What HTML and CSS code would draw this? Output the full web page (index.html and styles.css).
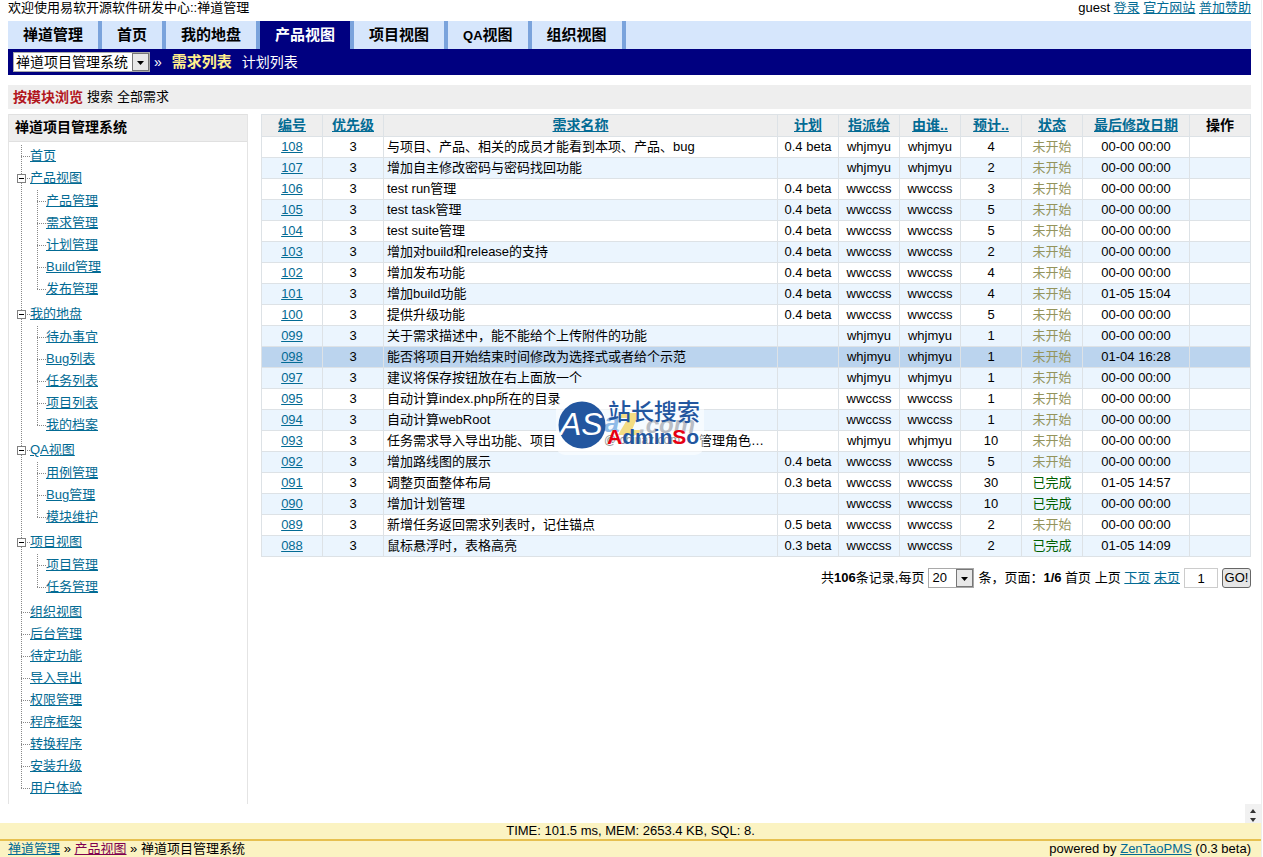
FILE: index.html
```html
<!DOCTYPE html>
<html lang="zh-CN">
<head>
<meta charset="utf-8">
<title>禅道管理</title>
<link rel="stylesheet" href="styles.css">
</head>
<body>
<div class="page">
<header class="header">
  <div class="topbar">
    <span>欢迎使用易软开源软件研发中心::禅道管理</span>
    <span>guest <a href="#">登录</a> <a href="#">官方网站</a> <a href="#">普加赞助</a></span>
  </div>
  <nav class="mainnav">
    <a href="#">禅道管理</a><a href="#">首页</a><a href="#">我的地盘</a><a href="#" class="active">产品视图</a><a href="#">项目视图</a><a href="#"><span class="latin">QA</span>视图</a><a href="#">组织视图</a>
  </nav>
  <nav class="subnav">
    <select class="product" aria-label="产品"><option>禅道项目管理系统</option></select>
    <span class="arrow">»</span>
    <a href="#" class="active">需求列表</a>
    <a href="#">计划列表</a>
  </nav>
  <div class="featurebar"><a href="#" class="active">按模块浏览</a><a href="#">搜索</a><a href="#">全部需求</a></div>
</header>
<main class="main">
  <aside class="sidebar">
    <h2>禅道项目管理系统</h2>
    <ul class="tree">
      <li><a href="#">首页</a></li>
      <li><button class="toggle" type="button" aria-label="折叠"></button><a href="#">产品视图</a>
        <ul>
          <li><a href="#">产品管理</a></li>
          <li><a href="#">需求管理</a></li>
          <li><a href="#">计划管理</a></li>
          <li><a href="#">Build管理</a></li>
          <li><a href="#">发布管理</a></li>
        </ul>
      </li>
      <li><button class="toggle" type="button" aria-label="折叠"></button><a href="#">我的地盘</a>
        <ul>
          <li><a href="#">待办事宜</a></li>
          <li><a href="#">Bug列表</a></li>
          <li><a href="#">任务列表</a></li>
          <li><a href="#">项目列表</a></li>
          <li><a href="#">我的档案</a></li>
        </ul>
      </li>
      <li><button class="toggle" type="button" aria-label="折叠"></button><a href="#">QA视图</a>
        <ul>
          <li><a href="#">用例管理</a></li>
          <li><a href="#">Bug管理</a></li>
          <li><a href="#">模块维护</a></li>
        </ul>
      </li>
      <li><button class="toggle" type="button" aria-label="折叠"></button><a href="#">项目视图</a>
        <ul>
          <li><a href="#">项目管理</a></li>
          <li><a href="#">任务管理</a></li>
        </ul>
      </li>
      <li><a href="#">组织视图</a></li>
      <li><a href="#">后台管理</a></li>
      <li><a href="#">待定功能</a></li>
      <li><a href="#">导入导出</a></li>
      <li><a href="#">权限管理</a></li>
      <li><a href="#">程序框架</a></li>
      <li><a href="#">转换程序</a></li>
      <li><a href="#">安装升级</a></li>
      <li><a href="#">用户体验</a></li>
    </ul>
  </aside>
  <section class="content">
    <table class="stories">
      <colgroup><col class="c-std"><col class="c-std"><col><col class="c-std"><col class="c-std"><col class="c-std"><col class="c-std"><col class="c-std"><col class="c-date"><col class="c-std"></colgroup>
      <thead>
        <tr><th><a href="#">编号</a></th><th><a href="#">优先级</a></th><th><a href="#">需求名称</a></th><th><a href="#">计划</a></th><th><a href="#">指派给</a></th><th><a href="#">由谁..</a></th><th><a href="#">预计..</a></th><th><a href="#">状态</a></th><th><a href="#">最后修改日期</a></th><th>操作</th></tr>
      </thead>
      <tbody>
        <tr><td><a href="#">108</a></td><td>3</td><td class="name">与项目、产品、相关的成员才能看到本项、产品、bug</td><td>0.4 beta</td><td>whjmyu</td><td>whjmyu</td><td>4</td><td class="wait">未开始</td><td>00-00 00:00</td><td></td></tr>
        <tr><td><a href="#">107</a></td><td>3</td><td class="name">增加自主修改密码与密码找回功能</td><td></td><td>whjmyu</td><td>whjmyu</td><td>2</td><td class="wait">未开始</td><td>00-00 00:00</td><td></td></tr>
        <tr><td><a href="#">106</a></td><td>3</td><td class="name">test run管理</td><td>0.4 beta</td><td>wwccss</td><td>wwccss</td><td>3</td><td class="wait">未开始</td><td>00-00 00:00</td><td></td></tr>
        <tr><td><a href="#">105</a></td><td>3</td><td class="name">test task管理</td><td>0.4 beta</td><td>wwccss</td><td>wwccss</td><td>5</td><td class="wait">未开始</td><td>00-00 00:00</td><td></td></tr>
        <tr><td><a href="#">104</a></td><td>3</td><td class="name">test suite管理</td><td>0.4 beta</td><td>wwccss</td><td>wwccss</td><td>5</td><td class="wait">未开始</td><td>00-00 00:00</td><td></td></tr>
        <tr><td><a href="#">103</a></td><td>3</td><td class="name">增加对build和release的支持</td><td>0.4 beta</td><td>wwccss</td><td>wwccss</td><td>2</td><td class="wait">未开始</td><td>00-00 00:00</td><td></td></tr>
        <tr><td><a href="#">102</a></td><td>3</td><td class="name">增加发布功能</td><td>0.4 beta</td><td>wwccss</td><td>wwccss</td><td>4</td><td class="wait">未开始</td><td>00-00 00:00</td><td></td></tr>
        <tr><td><a href="#">101</a></td><td>3</td><td class="name">增加build功能</td><td>0.4 beta</td><td>wwccss</td><td>wwccss</td><td>4</td><td class="wait">未开始</td><td>01-05 15:04</td><td></td></tr>
        <tr><td><a href="#">100</a></td><td>3</td><td class="name">提供升级功能</td><td>0.4 beta</td><td>wwccss</td><td>wwccss</td><td>5</td><td class="wait">未开始</td><td>00-00 00:00</td><td></td></tr>
        <tr><td><a href="#">099</a></td><td>3</td><td class="name">关于需求描述中，能不能给个上传附件的功能</td><td></td><td>whjmyu</td><td>whjmyu</td><td>1</td><td class="wait">未开始</td><td>00-00 00:00</td><td></td></tr>
        <tr class="hover"><td><a href="#">098</a></td><td>3</td><td class="name">能否将项目开始结束时间修改为选择式或者给个示范</td><td></td><td>whjmyu</td><td>whjmyu</td><td>1</td><td class="wait">未开始</td><td>01-04 16:28</td><td></td></tr>
        <tr><td><a href="#">097</a></td><td>3</td><td class="name">建议将保存按钮放在右上面放一个</td><td></td><td>whjmyu</td><td>whjmyu</td><td>1</td><td class="wait">未开始</td><td>00-00 00:00</td><td></td></tr>
        <tr><td><a href="#">095</a></td><td>3</td><td class="name">自动计算index.php所在的目录</td><td></td><td>wwccss</td><td>wwccss</td><td>1</td><td class="wait">未开始</td><td>00-00 00:00</td><td></td></tr>
        <tr><td><a href="#">094</a></td><td>3</td><td class="name">自动计算webRoot</td><td></td><td>wwccss</td><td>wwccss</td><td>1</td><td class="wait">未开始</td><td>00-00 00:00</td><td></td></tr>
        <tr><td><a href="#">093</a></td><td>3</td><td class="name">任务需求导入导出功能、项目<span class="covered"></span>管理角色…</td><td></td><td>whjmyu</td><td>whjmyu</td><td>10</td><td class="wait">未开始</td><td>00-00 00:00</td><td></td></tr>
        <tr><td><a href="#">092</a></td><td>3</td><td class="name">增加路线图的展示</td><td>0.4 beta</td><td>wwccss</td><td>wwccss</td><td>5</td><td class="wait">未开始</td><td>00-00 00:00</td><td></td></tr>
        <tr><td><a href="#">091</a></td><td>3</td><td class="name">调整页面整体布局</td><td>0.3 beta</td><td>wwccss</td><td>wwccss</td><td>30</td><td class="done">已完成</td><td>01-05 14:57</td><td></td></tr>
        <tr><td><a href="#">090</a></td><td>3</td><td class="name">增加计划管理</td><td></td><td>wwccss</td><td>wwccss</td><td>10</td><td class="done">已完成</td><td>00-00 00:00</td><td></td></tr>
        <tr><td><a href="#">089</a></td><td>3</td><td class="name">新增任务返回需求列表时，记住锚点</td><td>0.5 beta</td><td>wwccss</td><td>wwccss</td><td>2</td><td class="wait">未开始</td><td>00-00 00:00</td><td></td></tr>
        <tr><td><a href="#">088</a></td><td>3</td><td class="name">鼠标悬浮时，表格高亮</td><td>0.3 beta</td><td>wwccss</td><td>wwccss</td><td>2</td><td class="done">已完成</td><td>01-05 14:09</td><td></td></tr>
      </tbody>
    </table>
    <form class="pager">
      <span>共<b>106</b>条记录,每页</span>
      <select class="pagesize" aria-label="每页"><option>20</option></select>
      <span>条，页面：<b>1/6</b> 首页 上页 <a href="#">下页</a> <a href="#">末页</a></span>
      <input class="pageno" type="text" value="1" aria-label="页面">
      <button class="go" type="button">GO!</button>
    </form>
    <svg class="watermark" width="148" height="58" viewBox="0 0 148 58" aria-hidden="true">
      <rect x="0" y="2" width="148" height="55" rx="9" fill="#fff" fill-opacity=".55"/>
      <text x="48" y="34" class="wm-a">a</text>
      <path d="M66 15h17l-7 17h9l-3 5H62l10-17h-8z" fill="#f3dc83"/>
      <text x="83" y="35" class="wm-com">.com</text>
      <text x="48" y="46" class="wm-small">@ chinaz.com</text>
      <circle cx="26" cy="27" r="23.500" fill="#22569f"/>
      <text x="4" y="37" class="wm-as">AS</text>
      <text x="52" y="22" class="wm-cn">站长搜索</text>
      <text x="51" y="46" class="wm-en"><tspan class="wm-red">A</tspan>dmin<tspan class="wm-red">S</tspan>o</text>
    </svg>
  </section>
</main>
<div class="scrollrow">
  <svg class="scroller" width="16" height="19" viewBox="0 0 16 19" aria-hidden="true"><rect width="16" height="19" fill="#f1f1f1"/><path d="M5 9l3-4 3 4zM5 14l3 4 3-4z" fill="#333"/></svg>
</div>
<footer class="footer">
  <div class="stats">TIME: 101.5 ms, MEM: 2653.4 KB, SQL: 8.</div>
  <div class="crumbs">
    <span><a href="#">禅道管理</a> » <a href="#" class="visited">产品视图</a> » 禅道项目管理系统</span>
    <span>powered by <a href="#">ZenTaoPMS</a> (0.3 beta)</span>
  </div>
</footer>
</div>
</body>
</html>
```
FILE: styles.css
```css
* { box-sizing: border-box; }
body {
  margin: 0;
  background: #fff;
  color: #000;
  font: 13px/16px "Liberation Sans", "Noto Sans CJK SC", sans-serif;
}
a { color: #036b94; text-underline-offset: 1px; }
select, input, button { font: inherit; color: inherit; }

.page {
  display: flex;
  flex-direction: column;
  min-height: 100vh;
  margin-right: 1px;
  border-right: 1px solid #eee;
}
.header { padding: 0 10px 0 8px; }
.topbar {
  display: flex;
  justify-content: space-between;
  height: 21px;
  line-height: 15px;
}
.mainnav {
  display: flex;
  background: #d6e6fc;
  font-size: 15px;
  font-weight: bold;
  line-height: 28px;
}
.mainnav a {
  height: 28px;
  padding: 0 15px;
  border-right: 4px solid #7aa3dc;
  color: #000;
  text-decoration: none;
}
.mainnav .latin { font-size: 13px; }
.mainnav .active { background: #000080; color: #fff; }
.subnav {
  display: flex;
  align-items: center;
  height: 26px;
  padding-left: 5px;
  background: #000080;
  color: #fff;
  font-size: 14px;
}
.subnav a { margin-left: 10px; color: #fff; text-decoration: none; }
.subnav .active { color: #ffee8c; font-size: 15px; font-weight: bold; }
.arrow { margin-left: 4px; }

.product, .pagesize {
  height: 20px;
  padding: 0 18px 0 2px;
  border: 1px solid #a9a9a9;
  border-radius: 0;
  appearance: none;
  background: #fff url("data:image/svg+xml,%3Csvg xmlns='http://www.w3.org/2000/svg' width='17' height='18'%3E%3Crect x='.5' y='.5' width='16' height='17' fill='%23e8e8e8' stroke='%23777'/%3E%3Cpath d='M5 8h7l-3.500 4z'/%3E%3C/svg%3E") right center no-repeat;
  color: #000;
}
.product { width: 137px; }
.pagesize { width: 46px; padding-left: 3px; }

.featurebar {
  display: flex;
  gap: 4px;
  margin: 10px 0 5px;
  padding-left: 5px;
  background: #eee;
  line-height: 24px;
}
.featurebar a { color: #000; text-decoration: none; }
.featurebar .active { color: #b2161d; font-size: 14px; font-weight: bold; }

.main {
  display: flex;
  flex: 1;
  gap: 13px;
  padding: 0 10px 0 8px;
}
.sidebar {
  flex: 0 0 240px;
  border: 1px solid #e4e4e4;
  border-width: 0 1px;
}
.sidebar h2 {
  margin: 0;
  padding: 0 0 2px 6px;
  border: 1px solid #e0e0e0;
  border-width: 1px 0;
  background: #eee;
  font-size: 14px;
  line-height: 24px;
}

.tree, .tree ul { margin: 0; padding: 0; list-style: none; }
.tree { padding: 3px 0 5px 12px; line-height: 22px; }
.tree ul { padding: 1px 0 3px 7px; }
.tree li {
  padding-left: 9px;
  background:
    repeating-linear-gradient(#888 0 1px, transparent 1px 2px) left top / 1px 100% no-repeat,
    repeating-linear-gradient(90deg, #888 0 1px, transparent 1px 2px) left 11px / 9px 1px no-repeat;
}
.tree li:last-child {
  background-size: 1px 11px, 9px 1px;
}
.toggle {
  width: 9px;
  height: 9px;
  margin: 0 4px 0 -13px;
  padding: 0;
  border: 1px solid #808080;
  background: linear-gradient(#000, #000) center / 5px 1px no-repeat #fff;
  vertical-align: middle;
}

.content { position: relative; flex: 1; min-width: 0; }
.stories {
  width: 100%;
  border-collapse: collapse;
  table-layout: fixed;
}
.c-std { width: 61px; }
.c-date { width: 107px; }
.stories th, .stories td {
  height: 21px;
  padding: 0;
  border: 1px solid #dde2e6;
  line-height: 20px;
  text-align: center;
  white-space: nowrap;
}
.stories th { padding-bottom: 1px; background: #eee; font-size: 14px; }
.stories .name { padding-left: 3px; overflow: hidden; text-align: left; }
.stories tbody tr:nth-child(even) { background: #ebf5fe; }
.stories tbody .hover { background: #bbd4ee; }
.stories .wait { color: #94945c; }
.stories .done { color: #006000; }
.covered { display: inline-block; width: 143px; }

.pager {
  display: flex;
  align-items: center;
  justify-content: flex-end;
  gap: 4px;
  padding-top: 11px;
}
.pageno {
  width: 34px;
  height: 20px;
  padding: 0;
  border: 1px solid #ccc;
  text-align: center;
}
.go {
  width: 29px;
  height: 20px;
  padding: 0;
  border: 1px solid #666;
  border-radius: 3px;
  background: #e6e6e6;
}

.watermark { position: absolute; top: 284px; left: 295px; overflow: visible; }
.wm-as { fill: #fff; font: italic 32px "Liberation Sans", sans-serif; }
.wm-cn { fill: #22569f; font: 500 23px "Noto Sans CJK SC", sans-serif; }
.wm-en { fill: #22569f; font: bold 21px "Liberation Sans", sans-serif; }
.wm-red { fill: #e60012; }
.wm-a { fill: #8fbbe8; font: italic bold 28px "Liberation Sans", sans-serif; }
.wm-com { fill: #b9bdc4; font: italic bold 24px "Liberation Sans", sans-serif; }
.wm-small { fill: #999; font: 12px "Liberation Sans", sans-serif; }

.scrollrow { display: flex; justify-content: flex-end; }
.scroller { display: block; }
.footer { background: #fbf3c2; }
.stats { border-bottom: 2px solid #e6c04f; text-align: center; }
.crumbs {
  display: flex;
  justify-content: space-between;
  padding: 0 10px 0 8px;
}
.crumbs .visited { color: #800050; }
```
